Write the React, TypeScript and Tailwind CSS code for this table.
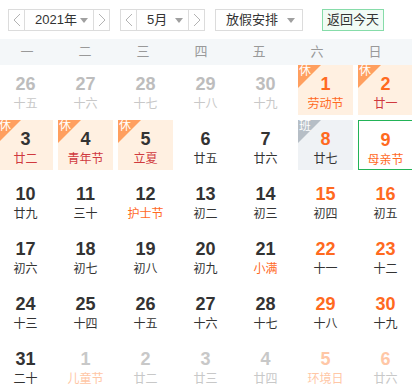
type Day = {
  n: number;
  l: string;
  nc: string;
  lc: string;
  tag?: "休" | "班";
  today?: boolean;
};

const DARK = "text-[#333333]";
const ORANGE = "text-[#ff6a1f]";
const RED = "text-[#d0393e]";
const GRAY = "text-[#bdbdbd]";
const LGRAY = "text-[#c8c8c8]";
const LORANGE = "text-[#ffc7a6]";

const days: Day[] = [
  { n: 26, l: "十五", nc: GRAY, lc: LGRAY },
  { n: 27, l: "十六", nc: GRAY, lc: LGRAY },
  { n: 28, l: "十七", nc: GRAY, lc: LGRAY },
  { n: 29, l: "十八", nc: GRAY, lc: LGRAY },
  { n: 30, l: "十九", nc: GRAY, lc: LGRAY },
  { n: 1, l: "劳动节", nc: ORANGE, lc: ORANGE, tag: "休" },
  { n: 2, l: "廿一", nc: ORANGE, lc: RED, tag: "休" },

  { n: 3, l: "廿二", nc: DARK, lc: RED, tag: "休" },
  { n: 4, l: "青年节", nc: DARK, lc: RED, tag: "休" },
  { n: 5, l: "立夏", nc: DARK, lc: RED, tag: "休" },
  { n: 6, l: "廿五", nc: DARK, lc: DARK },
  { n: 7, l: "廿六", nc: DARK, lc: DARK },
  { n: 8, l: "廿七", nc: ORANGE, lc: DARK, tag: "班" },
  { n: 9, l: "母亲节", nc: ORANGE, lc: ORANGE, today: true },

  { n: 10, l: "廿九", nc: DARK, lc: DARK },
  { n: 11, l: "三十", nc: DARK, lc: DARK },
  { n: 12, l: "护士节", nc: DARK, lc: ORANGE },
  { n: 13, l: "初二", nc: DARK, lc: DARK },
  { n: 14, l: "初三", nc: DARK, lc: DARK },
  { n: 15, l: "初四", nc: ORANGE, lc: DARK },
  { n: 16, l: "初五", nc: ORANGE, lc: DARK },

  { n: 17, l: "初六", nc: DARK, lc: DARK },
  { n: 18, l: "初七", nc: DARK, lc: DARK },
  { n: 19, l: "初八", nc: DARK, lc: DARK },
  { n: 20, l: "初九", nc: DARK, lc: DARK },
  { n: 21, l: "小满", nc: DARK, lc: ORANGE },
  { n: 22, l: "十一", nc: ORANGE, lc: DARK },
  { n: 23, l: "十二", nc: ORANGE, lc: DARK },

  { n: 24, l: "十三", nc: DARK, lc: DARK },
  { n: 25, l: "十四", nc: DARK, lc: DARK },
  { n: 26, l: "十五", nc: DARK, lc: DARK },
  { n: 27, l: "十六", nc: DARK, lc: DARK },
  { n: 28, l: "十七", nc: DARK, lc: DARK },
  { n: 29, l: "十八", nc: ORANGE, lc: DARK },
  { n: 30, l: "十九", nc: ORANGE, lc: DARK },

  { n: 31, l: "二十", nc: DARK, lc: DARK },
  { n: 1, l: "儿童节", nc: LGRAY, lc: LORANGE },
  { n: 2, l: "廿二", nc: LGRAY, lc: LGRAY },
  { n: 3, l: "廿三", nc: LGRAY, lc: LGRAY },
  { n: 4, l: "廿四", nc: LGRAY, lc: LGRAY },
  { n: 5, l: "环境日", nc: LORANGE, lc: LORANGE },
  { n: 6, l: "廿六", nc: LORANGE, lc: LGRAY },
];

const weekdays = ["一", "二", "三", "四", "五", "六", "日"];

const Chevron = ({ dir }: { dir: "l" | "r" }) => (
  <svg width="8" height="14" viewBox="0 0 8 14" fill="none">
    <polyline
      points={dir === "l" ? "7,1 1,7 7,13" : "1,1 7,7 1,13"}
      stroke="#b3b3b3"
      strokeWidth="1"
    />
  </svg>
);

const Caret = () => (
  <span className="inline-block w-0 h-0 border-x-[4px] border-x-transparent border-t-[5px] border-t-[#a0a0a0]" />
);

const Stepper = ({ label, mid }: { label: string; mid: string }) => (
  <div className="flex h-[22px] border border-[#dcdcdc] bg-white">
    <div className="w-[16px] flex items-center justify-center border-r border-[#dcdcdc]">
      <Chevron dir="l" />
    </div>
    <div className={`${mid} flex items-center justify-between pl-[10px] pr-[5px] text-[13px] text-[#333]`}>
      <span>{label}</span>
      <Caret />
    </div>
    <div className="w-[16px] flex items-center justify-center border-l border-[#dcdcdc]">
      <Chevron dir="r" />
    </div>
  </div>
);

const Cell = ({ d }: { d: Day }) => {
  let box = "bg-white";
  if (d.tag === "休") box = "bg-[#fff0e1]";
  if (d.tag === "班") box = "bg-[#eff2f5]";
  if (d.today) box = "bg-white border border-[#22b357]";
  return (
    <div className={`relative h-[50px] flex flex-col items-center pt-[8px] ${box}`}>
      {d.tag && (
        <>
          <div
            className={`absolute left-0 top-0 w-[23px] h-[23px] ${
              d.tag === "休" ? "bg-[#ff9f5f]" : "bg-[#b6bec6]"
            } [clip-path:polygon(0_0,100%_0,0_100%)]`}
          />
          <span className="absolute left-[1px] top-[-1px] text-[12px] leading-[15px] text-white">{d.tag}</span>
        </>
      )}
      <div className={`text-[18px] leading-[22px] font-bold ${d.nc}`} style={{ fontFamily: "'Liberation Sans', Arial, sans-serif" }}>
        {d.n}
      </div>
      <div className={`text-[12px] leading-[18px] ${d.lc}`}>{d.l}</div>
    </div>
  );
};

export default function App() {
  return (
    <div
      className="w-[412px] h-[388px] overflow-hidden bg-white"
      style={{ fontFamily: "'Liberation Sans', 'Noto Sans CJK SC', sans-serif" }}
    >
      <div className="flex items-center h-[39px] pt-[1px] pl-[8px]">
        <Stepper label="2021年" mid="w-[68px]" />
        <div className="w-[10px]" />
        <Stepper label="5月" mid="w-[51px]" />
        <div className="ml-[10px] w-[88px] h-[22px] border border-[#dcdcdc] flex items-center justify-between pl-[10px] pr-[7px] text-[13px] text-[#333]">
          <span>放假安排</span>
          <Caret />
        </div>
        <div className="ml-[19px] w-[62px] h-[22px] border border-[#86dca9] bg-[#f1fbf5] flex items-center justify-center text-[13px] text-[#333]">
          返回今天
        </div>
      </div>
      <div className="bg-[#f4f7f9] h-[26px]">
        <div className="grid grid-cols-[repeat(7,58px)] ml-[-2px] h-full">
          {weekdays.map((w) => (
            <div key={w} className="flex items-center justify-center text-[13px] text-[#999]">
              {w}
            </div>
          ))}
        </div>
      </div>
      <div className="grid grid-cols-[repeat(7,55px)] gap-x-[5px] gap-y-[5px] ml-[-2px] w-[415px]">
        {days.map((d, i) => (
          <Cell key={i} d={d} />
        ))}
      </div>
    </div>
  );
}
